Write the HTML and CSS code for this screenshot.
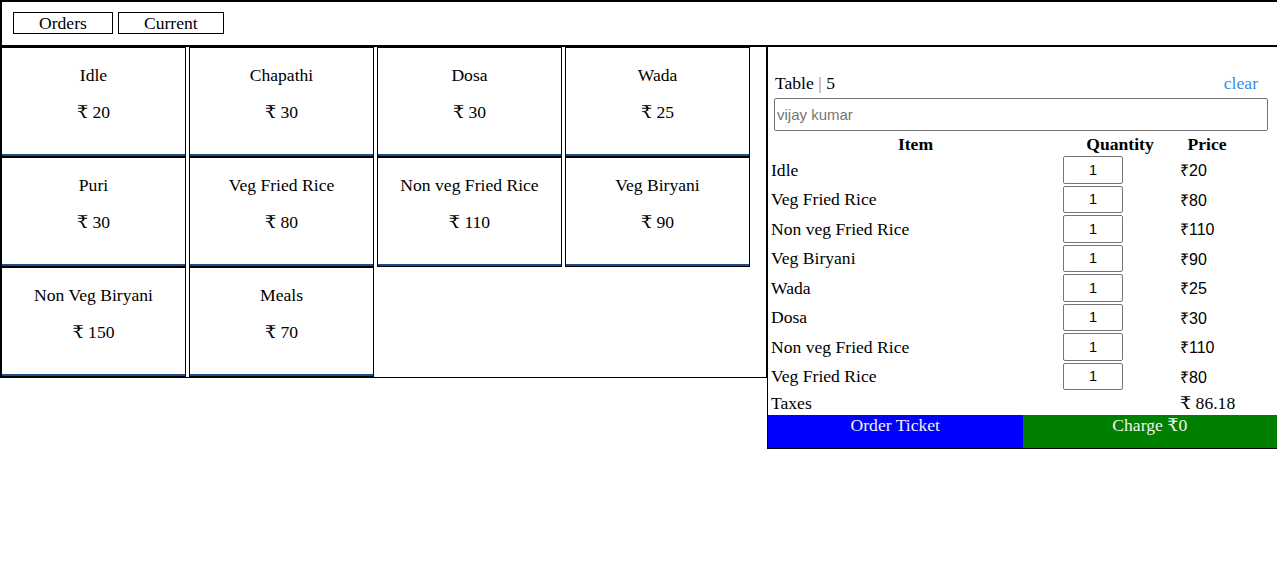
FILE: index.html
```html
<!DOCTYPE html>
<html>
<head>
<meta charset="utf-8">
<link rel="stylesheet" href="styles.css">
</head>
<body>
<header class="topbar">
  <button class="tab">Orders</button>
  <button class="tab">Current</button>
</header>
<main class="layout">
  <section class="menu">
    <div class="card"><p>Idle</p><p>₹ 20</p></div>
    <div class="card"><p>Chapathi</p><p>₹ 30</p></div>
    <div class="card"><p>Dosa</p><p>₹ 30</p></div>
    <div class="card"><p>Wada</p><p>₹ 25</p></div>
    <div class="card"><p>Puri</p><p>₹ 30</p></div>
    <div class="card"><p>Veg Fried Rice</p><p>₹ 80</p></div>
    <div class="card"><p>Non veg Fried Rice</p><p>₹ 110</p></div>
    <div class="card"><p>Veg Biryani</p><p>₹ 90</p></div>
    <div class="card"><p>Non Veg Biryani</p><p>₹ 150</p></div>
    <div class="card"><p>Meals</p><p>₹ 70</p></div>
  </section>
  <aside class="order">
    <div class="order-head">
      <span>Table <span class="sep">|</span> 5</span>
      <span class="clear">clear</span>
    </div>
    <input class="customer" type="text" placeholder="vijay kumar">
    <table class="items">
      <thead>
        <tr><th class="c-item">Item</th><th class="c-qty">Quantity</th><th class="c-price">Price</th></tr>
      </thead>
      <tbody>
        <tr><td>Idle</td><td><input class="qty" value="1"></td><td class="price">₹20</td></tr>
        <tr><td>Veg Fried Rice</td><td><input class="qty" value="1"></td><td class="price">₹80</td></tr>
        <tr><td>Non veg Fried Rice</td><td><input class="qty" value="1"></td><td class="price">₹110</td></tr>
        <tr><td>Veg Biryani</td><td><input class="qty" value="1"></td><td class="price">₹90</td></tr>
        <tr><td>Wada</td><td><input class="qty" value="1"></td><td class="price">₹25</td></tr>
        <tr><td>Dosa</td><td><input class="qty" value="1"></td><td class="price">₹30</td></tr>
        <tr><td>Non veg Fried Rice</td><td><input class="qty" value="1"></td><td class="price">₹110</td></tr>
        <tr><td>Veg Fried Rice</td><td><input class="qty" value="1"></td><td class="price">₹80</td></tr>
        <tr class="tax"><td>Taxes</td><td></td><td>₹ 86.18</td></tr>
      </tbody>
    </table>
    <div class="actions">
      <div class="act ticket">Order Ticket</div>
      <div class="act charge">Charge ₹0</div>
    </div>
  </aside>
</main>
</body>
</html>
```
FILE: styles.css
```css
html, body {
  margin: 0;
  padding: 0;
  background: #fff;
  overflow: hidden;
}
body {
  font-family: "Liberation Serif", "DejaVu Serif", serif;
  font-size: 17.6px;
  color: #000;
  width: 1277px;
}
.topbar {
  border: 2px solid #000;
  border-right: none;
  padding: 10px 0 11px 11px;
  display: flex;
  gap: 5px;
  height: 22px;
}
.tab {
  font-family: "Liberation Serif", serif;
  font-size: 17.6px;
  line-height: 20px;
  height: 22px;
  padding: 0 25px;
  margin: 0;
  border: 1px solid #000;
  background: #fff;
  color: #000;
  border-radius: 0;
}
.layout {
  display: flex;
  align-items: flex-start;
}
.menu {
  width: 767px;
  box-sizing: border-box;
  border: 1px solid #000;
  border-top: none;
  display: flex;
  flex-wrap: wrap;
  column-gap: 3px;
  align-content: flex-start;
}
.card {
  width: 185px;
  height: 110px;
  box-sizing: border-box;
  border: 1px solid #000;
  box-shadow: inset 0 -2px 0 #1b4f88;
  text-align: center;
}
.card p {
  margin: 17px 0 0;
  line-height: 20px;
}
.card p + p {
  margin-top: 17px;
}
.order {
  width: 509px;
  border-left: 1px solid #000;
  border-bottom: 1px solid #000;
}
.order-head {
  display: flex;
  justify-content: space-between;
  padding: 26px 19px 0 7px;
  line-height: 20px;
  margin-bottom: 5px;
}
.sep {
  color: #cf6f10;
}
.clear {
  color: #3b8ae6;
}
.customer {
  display: block;
  box-sizing: border-box;
  width: 494px;
  height: 33px;
  margin: 0 0 0 6px;
  border: 1px solid #767676;
  border-radius: 2px;
  padding: 0 2px;
  font-family: "Liberation Sans", Arial, sans-serif;
  font-size: 15px;
}
.customer::placeholder {
  color: #757575;
}
.items {
  width: 469px;
  table-layout: fixed;
  border-spacing: 2px;
  margin: 1px 0 0;
}
.items th {
  padding: 0;
  line-height: 20px;
  font-weight: bold;
  text-align: center;
}
.c-item { width: 291px; }
.c-qty { width: 114px; }
.c-price { width: 56px; }
.items td {
  padding: 0 0 0 1px;
  line-height: 20px;
  white-space: nowrap;
}
.qty {
  box-sizing: border-box;
  width: 60px;
  height: 27.5px;
  margin: 0 0 0 -1px;
  display: block;
  border: 1px solid #767676;
  border-radius: 2px;
  padding: 0;
  text-align: center;
  font-family: "Liberation Sans", Arial, sans-serif;
  font-size: 14.5px;
  color: #000;
}
.items td.price {
  font-family: "Liberation Sans", Arial, sans-serif;
  font-size: 16px;
  padding-top: 3px;
}
.tax td {
  height: 21px;
  padding-top: 0;
}
.actions {
  display: flex;
}
.act {
  flex: 1;
  height: 33px;
  text-align: center;
  color: #f2f2f2;
  line-height: 20px;
}
.ticket {
  background: #0000ff;
}
.charge {
  background: #008000;
}
```
